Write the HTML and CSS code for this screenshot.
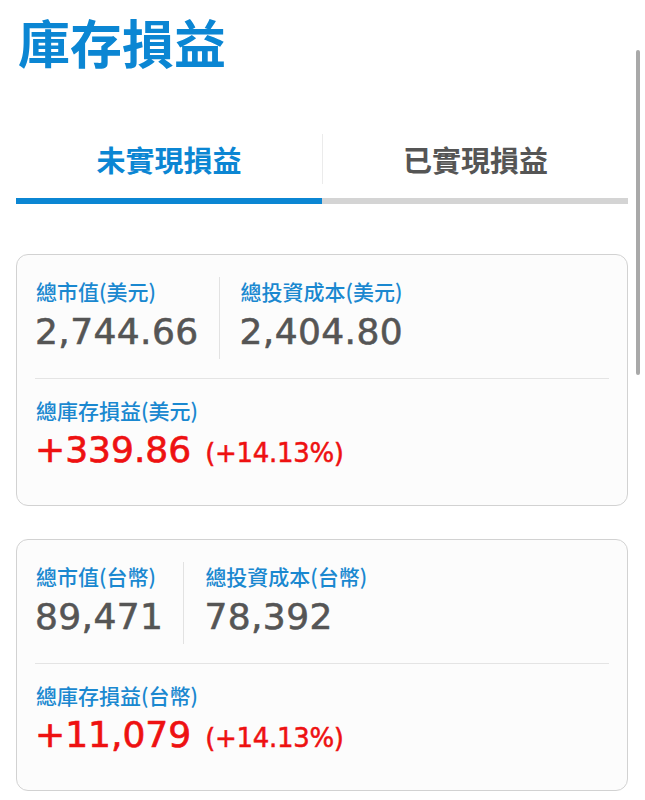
FILE: index.html
```html
<!DOCTYPE html>
<html lang="zh-Hant">
<head>
<meta charset="utf-8">
<title>庫存損益</title>
<link rel="stylesheet" href="styles.css">
</head>
<body>
<div class="page">
  <h1 class="title">庫存損益</h1>
  <div class="tabs">
    <div class="tab active"><div class="tab-label">未實現損益</div></div>
    <div class="tab"><div class="tab-label second">已實現損益</div></div>
  </div>

  <div class="card">
    <div class="stats">
      <div class="stat first">
        <div class="label">總市值(美元)</div>
        <div class="value">2,744.66</div>
      </div>
      <div class="stat">
        <div class="label">總投資成本(美元)</div>
        <div class="value">2,404.80</div>
      </div>
    </div>
    <div class="rule"></div>
    <div class="label">總庫存損益(美元)</div>
    <div class="pl"><span class="pl-value">+339.86</span><span class="pl-pct">(+14.13%)</span></div>
  </div>

  <div class="card">
    <div class="stats">
      <div class="stat first">
        <div class="label">總市值(台幣)</div>
        <div class="value">89,471</div>
      </div>
      <div class="stat">
        <div class="label">總投資成本(台幣)</div>
        <div class="value">78,392</div>
      </div>
    </div>
    <div class="rule"></div>
    <div class="label">總庫存損益(台幣)</div>
    <div class="pl"><span class="pl-value">+11,079</span><span class="pl-pct">(+14.13%)</span></div>
  </div>
</div>
<div class="scrollbar"></div>
</body>
</html>
```
FILE: styles.css
```css
html, body {
  margin: 0;
  padding: 0;
  background: #ffffff;
}
body {
  font-family: "Noto Sans CJK TC", "Noto Sans", sans-serif;
  width: 645px;
  height: 800px;
  overflow: hidden;
  position: relative;
}
.page {
  padding: 12px 17px 0 16px;
}
.title {
  margin: 0;
  font-size: 52px;
  line-height: 60px;
  font-weight: 700;
  color: #0b86d3;
  padding-left: 2px;
}
.tabs {
  display: flex;
  margin-top: 62px;
}
.tab {
  flex: 1;
  padding-bottom: 14px;
  border-bottom: 6px solid #d4d4d4;
}
.tab.active {
  border-bottom-color: #0b86d3;
}
.tab-label {
  height: 50px;
  line-height: 50px;
  text-align: center;
  font-size: 29px;
  font-weight: 700;
  color: #555555;
}
.tab.active .tab-label {
  color: #0b86d3;
}
.tab-label.second {
  border-left: 1px solid #ebebeb;
}
.card {
  margin-top: 50px;
  border: 1px solid #d2d2d2;
  border-radius: 12px;
  background: #fcfcfc;
  padding: 22px 18px 31px 18px;
}
.card + .card {
  margin-top: 33px;
}
.stats {
  display: flex;
  align-items: stretch;
}
.stat {
  padding-bottom: 6px;
}
.stat.first {
  padding-right: 20px;
  border-right: 1px solid #e2e2e2;
  margin-right: 20px;
}
.label {
  font-size: 21px;
  line-height: 28px;
  font-weight: 500;
  color: #1a88d0;
  margin-left: 1px;
}
.value {
  margin-top: 6px;
  font-family: "DejaVu Sans", "Liberation Sans", sans-serif;
  font-size: 36px;
  line-height: 42px;
  letter-spacing: 0.4px;
  color: #555555;
  -webkit-text-stroke: 0.6px #555555;
}
.rule {
  height: 1px;
  background: #e4e4e4;
  margin: 19px 0 17px 0;
}
.pl {
  margin-top: 5px;
  display: flex;
  align-items: baseline;
  color: #ee1111;
  line-height: 42px;
  font-family: "DejaVu Sans", "Liberation Sans", sans-serif;
}
.pl-value {
  font-size: 36px;
  margin-right: 14px;
  -webkit-text-stroke: 0.7px #ee1111;
}
.pl-pct {
  font-size: 26px;
  letter-spacing: -0.3px;
  -webkit-text-stroke: 0.5px #ee1111;
}
.scrollbar {
  position: absolute;
  left: 636px;
  top: 50px;
  width: 4px;
  height: 325px;
  border-radius: 2px;
  background: #a9a9a9;
}
```
